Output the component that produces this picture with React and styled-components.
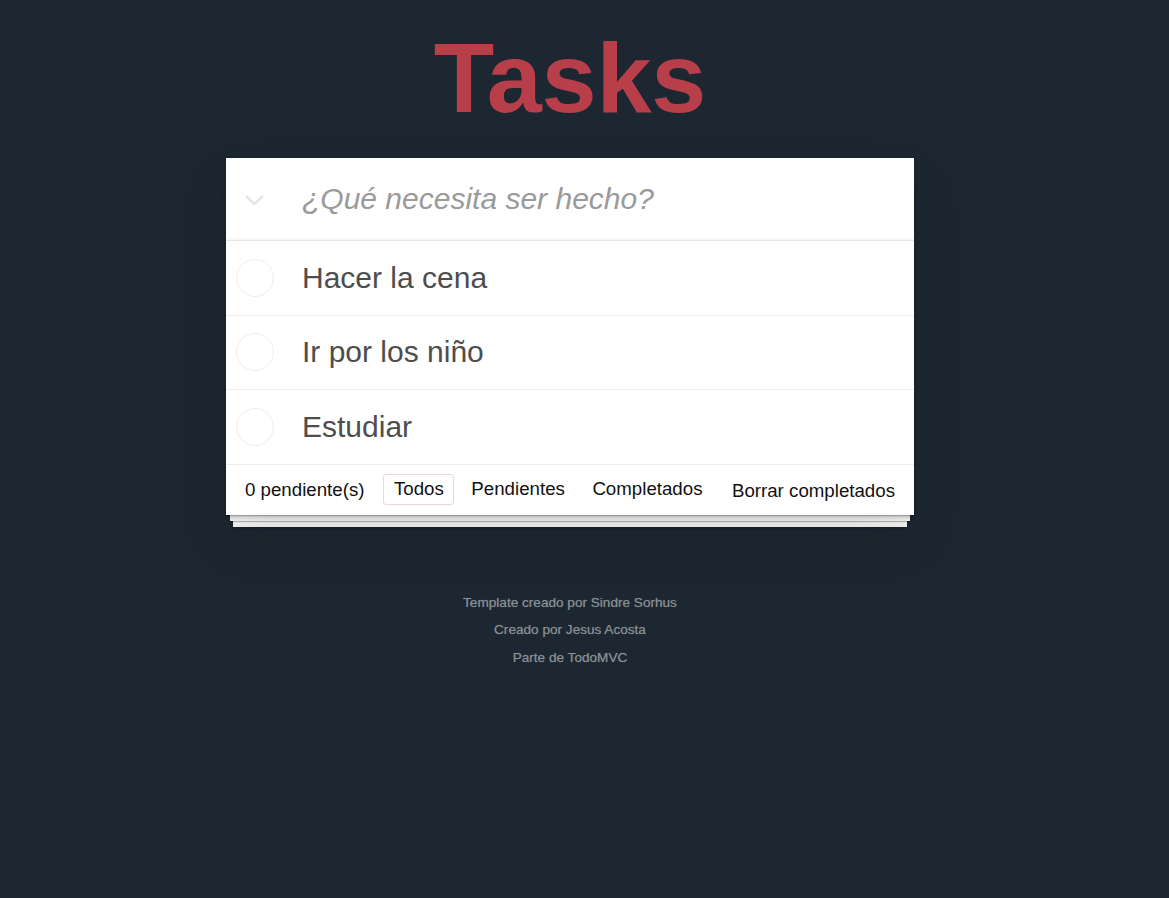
import React from "react";
import styled, { createGlobalStyle } from "styled-components";

const GlobalStyle = createGlobalStyle`
  html {
    background: #1c2731;
  }
  body {
    margin: 0;
    padding: 0;
    font-family: "Liberation Sans", Arial, Helvetica, sans-serif;
    -webkit-font-smoothing: antialiased;
  }
  * { box-sizing: border-box; }
`;

const tasks = [
  { id: 1, title: "Hacer la cena" },
  { id: 2, title: "Ir por los niño" },
  { id: 3, title: "Estudiar" },
];

const filters = ["Todos", "Pendientes", "Completados"];

function App() {
  return (
    <Page>
      <GlobalStyle />
      <Title>Tasks</Title>
      <Panel>
        <Header>
          <ToggleAll aria-label="Marcar todos">
            <svg width="21" height="14" viewBox="0 0 21 14">
              <polyline
                points="2,3 10.5,11 19,3"
                fill="none"
                stroke="#e6e6e6"
                strokeWidth="2.6"
              />
            </svg>
          </ToggleAll>
          <NewTask placeholder="¿Qué necesita ser hecho?" />
        </Header>
        <TaskList>
          {tasks.map((t) => (
            <TaskRow key={t.id}>
              <Check />
              <TaskLabel>{t.title}</TaskLabel>
            </TaskRow>
          ))}
        </TaskList>
        <Footer>
          <Count>0 pendiente(s)</Count>
          <Filters>
            {filters.map((f) => (
              <Filter key={f} selected={f === "Todos"}>
                {f}
              </Filter>
            ))}
          </Filters>
          <ClearButton>Borrar completados</ClearButton>
        </Footer>
      </Panel>
      <Info>
        <p>Template creado por Sindre Sorhus</p>
        <p>Creado por Jesus Acosta</p>
        <p>Parte de TodoMVC</p>
      </Info>
    </Page>
  );
}
export default App;

const Page = styled.div`
  width: 1140px;
  padding-top: 28px;
  display: flex;
  flex-direction: column;
  align-items: center;
  min-height: 898px;
`;

const Title = styled.h1`
  margin: 0;
  font-size: 99px;
  line-height: 1;
  font-weight: 700;
  color: #b83f4a;
  letter-spacing: -0.2px;
`;

const Panel = styled.section`
  width: 688px;
  margin-top: 31px;
  background: #fff;
  position: relative;
  box-shadow: 0 2px 4px rgba(0, 0, 0, 0.2), 0 25px 50px rgba(0, 0, 0, 0.1);
`;

const Header = styled.header`
  height: 83px;
  display: flex;
  align-items: center;
  border-bottom: 1px solid #e6e6e6;
  box-shadow: inset 0 -2px 1px rgba(0, 0, 0, 0.03);
`;

const ToggleAll = styled.div`
  width: 76px;
  height: 100%;
  display: flex;
  align-items: center;
  padding-left: 18px;
  padding-top: 2px;
`;

const NewTask = styled.input`
  flex: 1;
  height: 100%;
  border: 0;
  outline: none;
  padding: 0 16px 0 0;
  font-family: "Liberation Sans", Arial, sans-serif;
  font-size: 30px;
  color: #4d4d4d;
  background: transparent;
  &::placeholder {
    font-style: italic;
    color: #9a9a9a;
  }
`;

const TaskList = styled.ul`
  margin: 0;
  padding: 0;
  list-style: none;
`;

const TaskRow = styled.li`
  height: 74.6px;
  display: flex;
  align-items: center;
  border-bottom: 1px solid #ededed;
`;

const Check = styled.span`
  width: 38px;
  height: 38px;
  margin: 0 28px 0 10px;
  border: 1px solid #ededed;
  border-radius: 50%;
  flex-shrink: 0;
`;

const TaskLabel = styled.label`
  font-size: 30px;
  color: #4d4d4d;
  line-height: 1.2;
`;

const Footer = styled.footer`
  height: 50px;
  display: flex;
  align-items: center;
  padding: 0 19px;
  font-size: 18.7px;
  color: #111;
  position: relative;

  &::before {
    content: "";
    position: absolute;
    left: 0;
    right: 0;
    bottom: 0;
    height: 50px;
    z-index: -1;
    box-shadow: 0 1px 1px rgba(0, 0, 0, 0.2), 0 10px 0 -4px #f6f6f6,
      0 11px 1px -4px rgba(0, 0, 0, 0.25), 0 19px 0 -7px #f6f6f6,
      0 20px 2px -7px rgba(0, 0, 0, 0.25);
  }
`;

const Count = styled.span`
  color: #111;
`;

const Filters = styled.ul`
  display: flex;
  gap: 6.5px;
  margin: 0 0 0 19px;
  padding: 0;
  list-style: none;
`;

const Filter = styled.li`
  padding: 3px 9.5px 4px;
  border: 1px solid ${(p) => (p.selected ? "rgba(175, 47, 47, 0.2)" : "transparent")};
  border-radius: 3px;
  color: #111;
`;

const ClearButton = styled.button`
  margin-left: auto;
  border: 0;
  background: none;
  padding: 0;
  font: inherit;
  color: #111;
  margin-top: 2px;
`;

const Info = styled.footer`
  margin-top: 74px;
  text-align: center;
  color: #8b8f94;
  font-size: 13.6px;
  text-shadow: 0 0 1px rgba(139, 143, 148, 0.6);

  p {
    margin: 0;
    line-height: 27.5px;
  }
`;
